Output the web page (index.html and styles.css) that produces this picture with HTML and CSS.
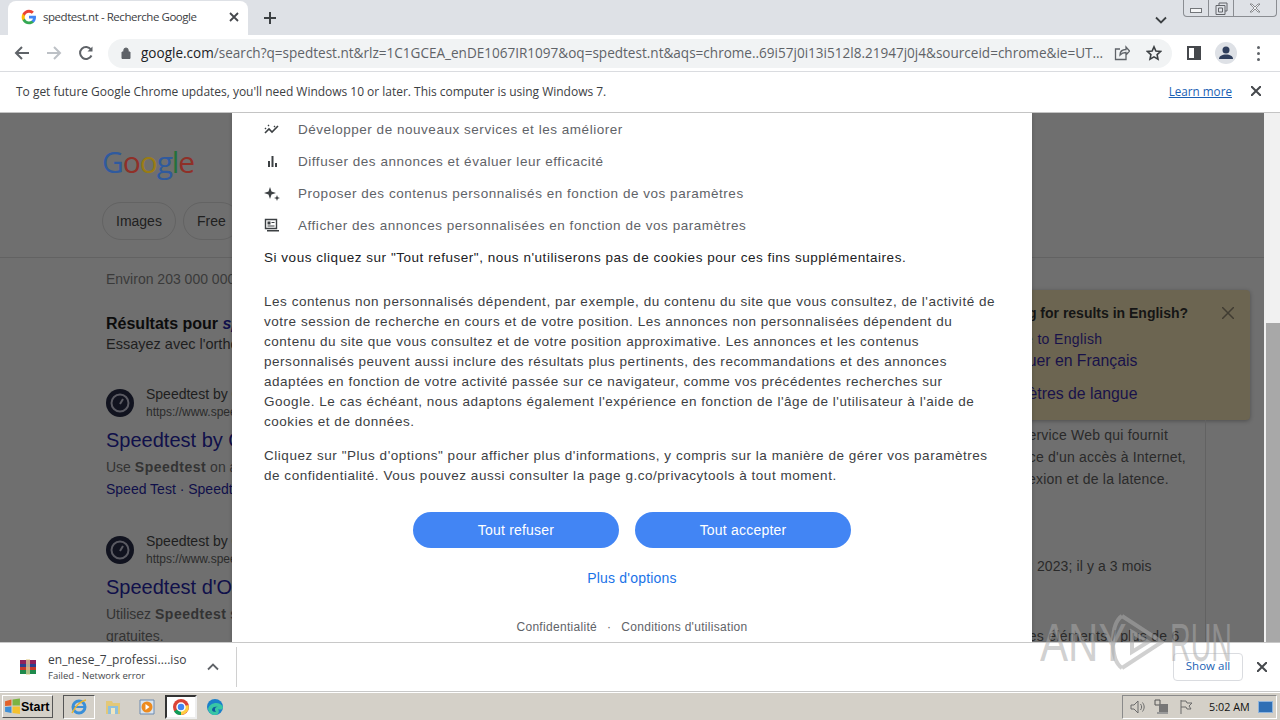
FILE: index.html
```html
<!DOCTYPE html>
<html lang="fr">
  <head>
    <meta charset="UTF-8" />
    <title>spedtest.nt - Recherche Google</title>
    <link rel="stylesheet" href="styles.css">
  </head>
  <body>
    <div class="tabstrip">
      <div class="tab">
        <svg class="favicon" viewBox="0 0 48 48" width="16" height="16">
          <path fill="#4285f4" d="M45 24.500c0-1.600-.1-3.100-.4-4.500H24v8.500h11.800c-.5 2.700-2 5-4.400 6.600v5.500h7.100C42.700 36.700 45 31.100 45 24.500z"/>
          <path fill="#34a853" d="M24 46c5.900 0 10.900-2 14.500-5.400l-7.100-5.500c-2 1.300-4.500 2.100-7.400 2.100-5.700 0-10.500-3.800-12.200-9H4.500v5.700C8.100 41 15.500 46 24 46z"/>
          <path fill="#fbbc05" d="M11.800 28.700c-.4-1.300-.7-2.700-.7-4.200s.3-2.900.7-4.200v-5.700H4.500C3 17.600 2 21 2 24.500s1 6.900 2.500 9.900l7.300-5.700z"/>
          <path fill="#ea4335" d="M24 11.300c3.200 0 6.100 1.100 8.400 3.300l6.300-6.300C34.900 4.800 29.900 2.500 24 2.500 15.500 2.500 8.100 7.500 4.500 14.600l7.300 5.700c1.700-5.200 6.500-9 12.200-9z"/>
        </svg>
        <span class="tab-title">spedtest.nt - Recherche Google</span>
        <svg class="tab-close" viewBox="0 0 10 10" width="10" height="10"><path d="M1 1l8 8M9 1l-8 8"/></svg>
      </div>
      <svg class="new-tab" viewBox="0 0 12 12" width="12" height="12"><path d="M6 0v12M0 6h12"/></svg>
      <div class="strip-fill"></div>
      <svg class="tab-list" viewBox="0 0 12 8" width="12" height="8"><path d="M1 1.500l5 5 5-5"/></svg>
      <div class="win-controls">
        <div class="win-btn win-min"><span class="min-glyph"></span></div>
        <div class="win-btn win-max">
          <svg viewBox="0 0 13 13" width="13" height="13"><path d="M4 3V1h8v8h-2M1 3.500h9v9H1zM3.500 6h4v4h-4z"/></svg>
        </div>
        <div class="win-btn win-close">
          <svg viewBox="0 0 12 10" width="12" height="10"><path d="M1 1l2 0 3 3 3-3 2 0-4 4 4 4-2 0-3-3-3 3-2 0 4-4z"/></svg>
        </div>
      </div>
    </div>

    <div class="toolbar">
      <svg class="nav-icon" viewBox="0 0 16 16" width="16" height="16"><path d="M15 8H2M8 2L2 8l6 6"/></svg>
      <svg class="nav-icon nav-off" viewBox="0 0 16 16" width="16" height="16"><path d="M1 8h13M8 2l6 6-6 6"/></svg>
      <svg class="nav-icon nav-last" viewBox="0 0 16 16" width="16" height="16"><path d="M13.500 10.500A6 6 0 1 1 13 4.500"/><path class="solid" d="M14.500 1.500v5h-5z"/></svg>
      <div class="omnibox">
        <svg class="lock" viewBox="0 0 10 12" width="10" height="12"><path d="M1 5h8v6.500H1zM2.800 5V3.200a2.200 2.200 0 0 1 4.400 0V5" /></svg>
        <span class="url"><span class="url-host">google.com</span>/search?q=spedtest.nt&amp;rlz=1C1GCEA_enDE1067IR1097&amp;oq=spedtest.nt&amp;aqs=chrome..69i57j0i13i512l8.21947j0j4&amp;sourceid=chrome&amp;ie=UT...</span>
        <svg class="omni-icon share" viewBox="0 0 16 16" width="16" height="16"><path d="M6 4H1.500v10.500H12V10M6 10c0-3.500 2.500-5.500 6-5.500V2l3.500 4-3.500 4V7.500c-2.500 0-4.500.8-6 2.500z"/></svg>
        <svg class="omni-icon star" viewBox="0 0 16 16" width="16" height="16"><path d="M8 1.800l1.900 4.200 4.600.5-3.400 3.100.9 4.600L8 11.900l-4 2.300.9-4.600-3.400-3.100 4.600-.5z"/></svg>
      </div>
      <span class="side-panel"><span class="side-panel-bar"></span></span>
      <span class="avatar">
        <svg viewBox="0 0 22 22" width="22" height="22"><circle cx="11" cy="8" r="3.500"/><path d="M4 17c0-3 3-4.500 7-4.500s7 1.500 7 4.500z"/></svg>
      </span>
      <span class="kebab"><i></i><i></i><i></i></span>
    </div>

    <div class="infobar">
      <span class="info-text">To get future Google Chrome updates, you'll need Windows 10 or later. This computer is using Windows 7.</span>
      <a class="info-link">Learn more</a>
      <svg class="info-close" viewBox="0 0 10 10" width="10" height="10"><path d="M0 0l10 10M10 0L0 10"/></svg>
    </div>

    <div class="page">
      <div class="results">
        <div class="serp-head">
          <div class="g-logo"><span class="c-b">G</span><span class="c-r">o</span><span class="c-y">o</span><span class="c-b">g</span><span class="c-g">l</span><span class="c-r">e</span></div>
          <div class="chips">
            <span class="chip">Images</span>
            <span class="chip">Free</span>
          </div>
        </div>
        <div class="serp-body">
          <div class="col-main">
            <p class="stats">Environ 203 000 000 résultats</p>
            <p class="spell"><b>Résultats pour <i class="spell-q">speedtest</i></b></p>
            <p class="spell-alt">Essayez avec l'orthographe</p>
            <div class="hit">
              <div class="hit-site">
                <svg class="gauge" viewBox="0 0 28 28" width="28" height="28"><circle cx="14" cy="14" r="14" fill="#11131f"/><circle cx="14" cy="14" r="8.500" fill="none" stroke="#5a5a62" stroke-width="2"/><path d="M14 15l3-5" stroke="#5a5a62" stroke-width="2"/></svg>
                <div class="hit-meta"><span class="hit-name">Speedtest by Ookla</span><span class="hit-url">https://www.speedtest.net</span></div>
              </div>
              <div class="hit-title">Speedtest by Ookla</div>
              <p class="hit-desc">Use <b>Speedtest</b> on all your devices</p>
              <p class="hit-links">Speed Test · Speedtest</p>
            </div>
            <div class="hit">
              <div class="hit-site">
                <svg class="gauge" viewBox="0 0 28 28" width="28" height="28"><circle cx="14" cy="14" r="14" fill="#11131f"/><circle cx="14" cy="14" r="8.500" fill="none" stroke="#5a5a62" stroke-width="2"/><path d="M14 15l3-5" stroke="#5a5a62" stroke-width="2"/></svg>
                <div class="hit-meta"><span class="hit-name">Speedtest by Ookla</span><span class="hit-url">https://www.speedtest.net</span></div>
              </div>
              <div class="hit-title">Speedtest d'Ookla</div>
              <p class="hit-desc">Utilisez <b>Speedtest</b> sur tous vos</p>
              <p class="hit-desc hit-last">gratuites.</p>
            </div>
          </div>
          <div class="col-side">
            <div class="lang-card">
              <div class="lang-title">Looking for results in English?<svg class="lang-close" viewBox="0 0 12 12" width="12" height="12"><path d="M0 0l12 12M12 0L0 12"/></svg></div>
              <div class="lang-link lang-first">Change to English</div>
              <div class="lang-link lang-second">Continuer en Français</div>
              <div class="lang-link lang-third">Paramètres de langue</div>
            </div>
            <div class="panel">
              <p class="panel-text">Speedtest est un site et un service Web qui fournit</p>
              <p class="panel-text">une analyse de la performance d'un accès à Internet,</p>
              <p class="panel-text">comme la vitesse de la connexion et de la latence.</p>
              <p class="panel-date">Date de sortie initiale du site : 2023; il y a 3 mois</p>
              <p class="panel-more">Voir encore beaucoup d'autres éléments / plus de 6</p>
            </div>
          </div>
        </div>
      </div>

      <div class="scrollbar"><div class="scroll-thumb"></div></div>

      <div class="consent">
        <div class="purpose">
          <svg viewBox="0 0 16 16" width="16" height="16"><path d="M1 12l4-4 3 3 6-6" fill="none" stroke="#3c4043" stroke-width="1.600"/><path d="M1 7l1 1M4 4l1 1M10 5l1 1" stroke="#3c4043" stroke-width="1.400"/></svg>
          <span>Développer de nouveaux services et les améliorer</span>
        </div>
        <div class="purpose">
          <svg viewBox="0 0 16 16" width="16" height="16"><path d="M4 8h2v6H4zM7.500 3h2v11h-2zM11 10h2v4h-2z" fill="#3c4043"/></svg>
          <span>Diffuser des annonces et évaluer leur efficacité</span>
        </div>
        <div class="purpose">
          <svg viewBox="0 0 16 16" width="16" height="16"><path d="M6 2l1.500 4.500L12 8l-4.500 1.500L6 14l-1.500-4.500L0 8l4.500-1.500zM13 10l.8 2.200L16 13l-2.200.8L13 16l-.8-2.200L10 13l2.200-.8z" fill="#3c4043"/></svg>
          <span>Proposer des contenus personnalisés en fonction de vos paramètres</span>
        </div>
        <div class="purpose">
          <svg viewBox="0 0 16 16" width="16" height="16"><path d="M1.500 2.500h11v9h-11z" fill="none" stroke="#3c4043" stroke-width="1.400"/><path d="M3.500 4.500h3v3h-3zM7.500 5h3v1h-3zM3.500 8.500h7v1h-7zM3 13h12v1.500H3z" fill="#3c4043"/></svg>
          <span>Afficher des annonces personnalisées en fonction de vos paramètres</span>
        </div>
        <p class="refuse-note">Si vous cliquez sur "Tout refuser", nous n'utiliserons pas de cookies pour ces fins supplémentaires.</p>
        <p class="consent-para first-para">Les contenus non personnalisés dépendent, par exemple, du contenu du site que vous consultez, de l'activité de votre session de recherche en cours et de votre position. Les annonces non personnalisées dépendent du contenu du site que vous consultez et de votre position approximative. Les annonces et les contenus personnalisés peuvent aussi inclure des résultats plus pertinents, des recommandations et des annonces adaptées en fonction de votre activité passée sur ce navigateur, comme vos précédentes recherches sur Google. Le cas échéant, nous adaptons également l'expérience en fonction de l'âge de l'utilisateur à l'aide de cookies et de données.</p>
        <p class="consent-para second-para">Cliquez sur "Plus d'options" pour afficher plus d'informations, y compris sur la manière de gérer vos paramètres de confidentialité. Vous pouvez aussi consulter la page g.co/privacytools à tout moment.</p>
        <div class="consent-btns">
          <a class="pill pill-refuse">Tout refuser</a>
          <a class="pill pill-accept">Tout accepter</a>
        </div>
        <a class="more-options">Plus d'options</a>
        <div class="consent-foot">
          <span>Confidentialité</span><span class="foot-dot">·</span><span>Conditions d'utilisation</span>
        </div>
      </div>
    </div>

    <div class="shelf">
      <div class="dl-item">
        <svg class="rar" viewBox="0 0 16 16" width="16" height="16">
          <path fill="#8e1f5c" d="M0 1h16v4H0z"/>
          <path fill="#2b3f8f" d="M0 5h16v3H0z"/>
          <path fill="#c7382c" d="M0 8h16v3H0z"/>
          <path fill="#1f8a4c" d="M0 11h16v4H0z"/>
          <path fill="#e8d9a0" d="M6 0h4v16H6z" opacity=".7"/>
        </svg>
        <div class="dl-text">
          <span class="dl-name">en_nese_7_professi....iso</span>
          <span class="dl-status">Failed - Network error</span>
        </div>
        <svg class="dl-caret" viewBox="0 0 12 8" width="12" height="8"><path d="M1 6.500l5-5 5 5"/></svg>
      </div>
      <div class="shelf-fill"></div>
      <a class="show-all">Show all</a>
      <svg class="shelf-close" viewBox="0 0 10 10" width="10" height="10"><path d="M0 0l10 10M10 0L0 10"/></svg>
    </div>

    <div class="taskbar">
      <div class="start-btn">
        <svg viewBox="0 0 16 16" width="17" height="17">
          <path fill="#e2622a" d="M1 3l6-1.500V7L1 7.500z"/>
          <path fill="#7cb342" d="M8 1.500l7 -1V7L8 7z"/>
          <path fill="#3f8fd6" d="M1 8.500L7 8v6l-6-1z"/>
          <path fill="#f5c12e" d="M8 8h7v7l-7-1z"/>
        </svg>
        <span>Start</span>
      </div>
      <div class="task-btn task-sunken">
        <svg viewBox="0 0 18 18" width="18" height="18"><circle cx="9" cy="9" r="6" fill="none" stroke="#3a8fd8" stroke-width="3"/><path d="M3 9h12" stroke="#3a8fd8" stroke-width="2"/><path d="M2 15C6 7 11 3 16 2" fill="none" stroke="#e9b52f" stroke-width="1.500"/></svg>
      </div>
      <div class="task-btn">
        <svg viewBox="0 0 18 18" width="18" height="18"><path d="M2 3h6l1 2h7v11H2z" fill="#e3c878"/><path d="M4 8h10v8H4z" fill="#8fc0dd"/><path d="M7 10h4v6H7z" fill="#f0e6c0"/></svg>
      </div>
      <div class="task-btn">
        <svg viewBox="0 0 18 18" width="18" height="18"><path d="M2 2h14v14H2z" fill="#d9e4ef" stroke="#6d8bb0"/><circle cx="9" cy="9" r="5.500" fill="#ed8b1f"/><path d="M7.500 6l4 3-4 3z" fill="#fff"/></svg>
      </div>
      <div class="task-btn task-active">
        <svg viewBox="0 0 18 18" width="18" height="18">
          <circle cx="9" cy="9" r="8" fill="#db4437"/>
          <path d="M9 9L2 13.500A8 8 0 0 0 9 17z" fill="#0f9d58"/>
          <path d="M9 9l7.500-2A8 8 0 0 1 9 17z" fill="#ffcd40"/>
          <circle cx="9" cy="9" r="4" fill="#4285f4" stroke="#fff" stroke-width="1.500"/>
        </svg>
      </div>
      <div class="task-btn">
        <svg viewBox="0 0 18 18" width="18" height="18"><circle cx="9" cy="9" r="8" fill="#1a7fc9"/><path d="M2 11c2-7 12-8 15-2 0 3-3 3-5 2 2 3 0 6-3 6-3 0-6-2-7-6z" fill="#38c6a5"/><path d="M6 12c0-3 3-4 6-3-3 0-4 2-2 5-2 0-4-1-4-2z" fill="#0e5a9e"/></svg>
      </div>
      <div class="task-fill"></div>
      <div class="tray">
        <svg viewBox="0 0 16 16" width="16" height="16"><path d="M1 6h3l4-4v12l-4-4H1z" fill="none" stroke="#6b6b6b"/><path d="M10.500 5c1.500 2 1.500 4 0 6M12.500 3.500c2.200 3 2.200 6 0 9" fill="none" stroke="#6b6b6b"/></svg>
        <svg viewBox="0 0 16 16" width="16" height="16"><path d="M1 1h5v5H1z" fill="none" stroke="#555"/><path d="M5 5h9v8H5z" fill="#777"/><path d="M3 13h11v2H3z" fill="#999"/></svg>
        <svg viewBox="0 0 16 16" width="16" height="16"><path d="M3 1v14M3 2h5l1 2h5l-3 3 2 3H9L8 8H3" fill="none" stroke="#6b6b6b"/></svg>
        <span class="clock">5:02 AM</span>
        <span class="desktop-peek"></span>
      </div>
    </div>

    <div class="watermark">
      <span class="wm-any">ANY</span>
      <svg viewBox="0 0 54 60" width="54" height="60"><path d="M12 4C6 8 3 16 3 30s3 22 9 26M12 4l40 26-40 26M22 20l16 10-16 10z"/></svg>
      <span class="wm-run">RUN</span>
    </div>
  </body>
</html>
```

FILE: styles.css
```css
* {
  box-sizing: border-box;
}

html,
body {
  margin: 0;
  padding: 0;
  height: 720px;
  overflow: hidden;
}

body {
  display: flex;
  flex-direction: column;
  position: relative;
  font-family: "Liberation Sans", Arial, sans-serif;
  background-color: white;
}

p {
  margin: 0;
}

/* onglets */
.tabstrip {
  height: 35px;
  flex: none;
  display: flex;
  align-items: flex-end;
  padding-left: 8px;
  background-color: #dee1e6;
}

.tab {
  width: 240px;
  height: 34px;
  display: flex;
  align-items: center;
  padding: 0 9px 3px 13px;
  background-color: white;
  border-radius: 8px 8px 0 0;
}

.tab-title {
  flex: 1;
  margin-left: 6px;
  font-family: "Open Sans", sans-serif;
  font-size: 11.500px;
  letter-spacing: -0.450px;
  color: #3c4043;
  white-space: nowrap;
}

.tab-close path {
  fill: none;
  stroke: #45484c;
  stroke-width: 1.800;
}

.new-tab {
  margin: 0 0 11px 16px;
}

.new-tab path {
  fill: none;
  stroke: #3c4043;
  stroke-width: 2;
}

.strip-fill {
  flex: 1;
}

.tab-list {
  margin: 0 16px 11px 0;
}

.tab-list path {
  fill: none;
  stroke: #3c4043;
  stroke-width: 1.800;
}

.win-controls {
  align-self: flex-start;
  width: 94px;
  height: 17px;
  margin-right: 3px;
  display: flex;
  border: 1px solid #8a8d92;
  border-top: none;
  border-radius: 0 0 4px 4px;
  background-color: #dee1e6;
}

.win-btn {
  display: flex;
  align-items: center;
  justify-content: center;
  border-right: 1px solid #8a8d92;
}

.win-min {
  width: 25px;
}

.win-max {
  width: 25px;
}

.win-close {
  flex: 1;
  border-right: none;
}

.min-glyph {
  width: 12px;
  height: 5px;
  margin-top: 4px;
  background-color: #f4f5f6;
  border: 1px solid #73767a;
}

.win-max path {
  fill: none;
  stroke: #62656a;
}

.win-close path {
  fill: #f4f5f6;
  stroke: #73767a;
  stroke-width: 0.800;
}

/* barre d'adresse */
.toolbar {
  height: 37px;
  flex: none;
  display: flex;
  align-items: center;
  padding-left: 14px;
  background-color: white;
  border-bottom: 1px solid #dadce0;
}

.nav-icon {
  margin-right: 16px;
}

.nav-last {
  margin-right: 14px;
}

.nav-icon path {
  fill: none;
  stroke: #5f6368;
  stroke-width: 2;
}

.nav-icon .solid {
  fill: #5f6368;
  stroke: none;
}

.nav-off path {
  stroke: #bdc1c6;
}

.omnibox {
  width: 1064px;
  height: 29px;
  display: flex;
  align-items: center;
  padding: 0 10px 0 13px;
  background-color: #f1f3f4;
  border-radius: 15px;
}

.lock path {
  fill: #5f6368;
  stroke: #5f6368;
}

.url {
  flex: 1;
  margin-left: 10px;
  font-family: "Open Sans", sans-serif;
  font-size: 13.560px;
  color: #5f6368;
  white-space: nowrap;
}

.url-host {
  color: #202124;
}

.omni-icon {
  flex: none;
  margin-left: 16px;
}

.share {
  margin-left: 4px;
}

.omni-icon path {
  fill: none;
  stroke: #5f6368;
  stroke-width: 1.300;
}

.star path {
  stroke: #3c4043;
  stroke-width: 1.600;
}

.side-panel {
  width: 14px;
  height: 14px;
  margin-left: 15px;
  display: flex;
  justify-content: flex-end;
  background-color: white;
  border: 2px solid #45484c;
}

.side-panel-bar {
  width: 5px;
  background-color: #45484c;
}

.avatar {
  width: 22px;
  height: 22px;
  margin-left: 14px;
  border-radius: 50%;
  background-color: #dee1e6;
}

.avatar svg {
  display: block;
  fill: #2f3e5c;
}

.kebab {
  margin-left: 20px;
  display: flex;
  flex-direction: column;
  gap: 3px;
}

.kebab i {
  width: 3px;
  height: 3px;
  border-radius: 50%;
  background-color: #5f6368;
}

/* bandeau */
.infobar {
  height: 41px;
  flex: none;
  display: flex;
  align-items: center;
  padding: 0 19px 2px 16px;
  background-color: white;
  border-bottom: 1px solid #c4c4c4;
}

.info-text {
  flex: 1;
  font-family: "Open Sans", sans-serif;
  font-size: 12px;
  letter-spacing: -0.020px;
  color: #3c4043;
}

.info-link {
  font-family: "Open Sans", sans-serif;
  font-size: 11.700px;
  color: #1a5fb4;
  text-decoration: underline;
}

.info-close {
  margin-left: 19px;
}

.info-close path {
  fill: none;
  stroke: #45484c;
  stroke-width: 2;
}

/* page assombrie */
.page {
  height: 529px;
  flex: none;
  position: relative;
  overflow: hidden;
  display: flex;
  background-color: #6f6f6f;
}

.results {
  flex: 1;
  min-width: 0;
}

.serp-head {
  height: 145px;
  padding: 32px 0 0 102px;
  border-bottom: 1px solid #626262;
}

.g-logo {
  font-family: "Open Sans", sans-serif;
  font-size: 30px;
  line-height: 34px;
  letter-spacing: -1.100px;
}

.c-b {
  color: #2f5a9e;
}

.c-r {
  color: #8f3028;
}

.c-y {
  color: #9a7c14;
}

.c-g {
  color: #24713a;
}

.chips {
  display: flex;
  gap: 7px;
  margin-top: 23px;
}

.chip {
  height: 38px;
  padding: 0 13px;
  display: flex;
  align-items: center;
  font-size: 14px;
  color: #202020;
  border: 1px solid #636363;
  border-radius: 19px;
}

.serp-body {
  display: flex;
  height: 384px;
}

.col-main {
  width: 670px;
  padding: 13px 0 0 106px;
  color: #222;
  font-size: 14px;
}

.stats {
  font-size: 14px;
  line-height: 16px;
  color: #3a3a3a;
}

.spell {
  margin-top: 27px;
  font-size: 16px;
  line-height: 20px;
  color: #0c0c0c;
}

.spell-q {
  color: #10104a;
}

.spell-alt {
  font-size: 14.500px;
  line-height: 20px;
  color: #1e1e1e;
}

.hit {
  height: 147px;
  margin-top: 31px;
}

.hit + .hit {
  margin-top: 0;
}

.hit-site {
  display: flex;
  align-items: center;
  gap: 12px;
}

.hit-meta {
  display: flex;
  flex-direction: column;
}

.hit-name {
  font-size: 14px;
  line-height: 18px;
  color: #1e1e1e;
}

.hit-url {
  font-size: 12px;
  line-height: 18px;
  color: #2b2b2b;
}

.hit-title {
  margin-top: 6px;
  font-size: 20px;
  line-height: 26px;
  color: #10104a;
}

.hit-desc {
  margin-top: 5px;
  line-height: 18px;
  color: #333;
}

.hit-desc b {
  letter-spacing: 0.500px;
}

.hit-last {
  margin-top: 4px;
}

.hit-links {
  margin-top: 4px;
  line-height: 18px;
  color: #10104a;
}

.col-side {
  width: 594px;
  padding-top: 32px;
  margin-right: 16px;
  flex: none;
  margin-left: auto;
}

.lang-card {
  width: 582px;
  height: 130px;
  padding: 14px 16px 0 314px;
  margin-left: 14px;
  background-color: #6c6551;
  border-radius: 4px;
  box-shadow: 0 1px 4px rgba(0, 0, 0, 0.3);
}

.lang-title {
  display: flex;
  justify-content: space-between;
  align-items: center;
  height: 18px;
  font-size: 14px;
  font-weight: bold;
  color: #151515;
}

.lang-close path {
  fill: none;
  stroke: #403c32;
  stroke-width: 1.500;
}

.lang-link {
  color: #18124a;
  font-size: 15.800px;
  line-height: 20px;
}

.lang-first {
  margin-top: 8px;
  font-size: 14px;
  line-height: 18px;
  letter-spacing: 0.350px;
}

.lang-second {
  margin-top: 3px;
}

.lang-third {
  margin-top: 13px;
}

.panel {
  width: 552px;
  height: 230px;
  padding-top: 4px;
  padding-left: 192px;
  border-right: 1px solid #626262;
}

.panel-text {
  font-size: 14px;
  line-height: 22px;
  letter-spacing: 0.200px;
  color: #2a2a2a;
  white-space: nowrap;
}

.panel-date {
  margin-top: 67px;
  font-size: 14px;
  line-height: 18px;
  letter-spacing: 0.100px;
  color: #2a2a2a;
  white-space: nowrap;
}

.panel-more {
  margin-top: 52px;
  font-size: 14px;
  line-height: 18px;
  letter-spacing: 0.300px;
  color: #2a2a2a;
  white-space: nowrap;
}

.scrollbar {
  width: 16px;
  flex: none;
  padding-top: 210px;
  background-color: #f1f1f1;
}

.scroll-thumb {
  height: 319px;
  margin-left: 2px;
  background-color: #a8a8a8;
}

/* fenêtre de consentement */
.consent {
  position: absolute;
  top: 0;
  left: 232px;
  width: 800px;
  height: 529px;
  padding: 0 32px;
  background-color: white;
  box-shadow: 0 0 4px rgba(0, 0, 0, 0.2);
  font-size: 13.500px;
  letter-spacing: 0.530px;
  color: #202124;
}

.purpose {
  height: 32px;
  display: flex;
  align-items: center;
  gap: 18px;
  color: #5f6368;
}

.purpose svg {
  flex: none;
}

.refuse-note {
  margin-top: 7px;
  line-height: 20px;
  color: #202124;
  white-space: nowrap;
}

.consent-para {
  width: 732px;
  line-height: 20px;
  color: #3c4043;
}

.first-para {
  margin-top: 24px;
}

.second-para {
  margin-top: 14px;
}

.consent-btns {
  display: flex;
  justify-content: center;
  gap: 16px;
  margin-top: 26px;
}

.pill {
  height: 36px;
  display: flex;
  align-items: center;
  justify-content: center;
  font-size: 14px;
  letter-spacing: 0.200px;
  color: white;
  background-color: #4285f4;
  border-radius: 18px;
}

.pill-refuse {
  width: 206px;
}

.pill-accept {
  width: 216px;
}

.more-options {
  display: block;
  margin-top: 21px;
  text-align: center;
  font-size: 14px;
  line-height: 18px;
  letter-spacing: 0.200px;
  color: #1a73e8;
}

.consent-foot {
  display: flex;
  justify-content: center;
  gap: 10px;
  margin-top: 32px;
  font-size: 12px;
  line-height: 16px;
  letter-spacing: 0.300px;
  color: #5f6368;
}

/* téléchargements */
.shelf {
  height: 50px;
  flex: none;
  display: flex;
  align-items: center;
  padding-right: 13px;
  background-color: white;
  border-top: 1px solid #c8c8c8;
  border-bottom: 1px solid #c8c8c8;
}

.dl-item {
  width: 237px;
  height: 40px;
  display: flex;
  align-items: center;
  padding: 0 17px 0 20px;
  border-right: 1px solid #d0d0d0;
}

.dl-text {
  flex: 1;
  margin: -2px 0 0 12px;
  display: flex;
  flex-direction: column;
  font-family: "Open Sans", sans-serif;
}

.dl-name {
  font-size: 12px;
  line-height: 18px;
  letter-spacing: 0.080px;
  color: #3c4043;
  white-space: nowrap;
}

.dl-status {
  font-size: 9.500px;
  line-height: 13px;
  color: #45484c;
}

.dl-caret path {
  fill: none;
  stroke: #5f6368;
  stroke-width: 1.800;
}

.shelf-fill {
  flex: 1;
}

.show-all {
  width: 70px;
  height: 28px;
  display: flex;
  align-items: center;
  justify-content: center;
  padding-bottom: 3px;
  font-family: "Open Sans", sans-serif;
  font-size: 11.500px;
  color: #1a5fb4;
  background-color: white;
  border: 1px solid #dadce0;
  border-radius: 4px;
}

.shelf-close {
  margin-left: 14px;
}

.shelf-close path {
  fill: none;
  stroke: #45484c;
  stroke-width: 2;
}

/* barre des tâches */
.taskbar {
  height: 28px;
  flex: none;
  display: flex;
  align-items: center;
  padding: 2px 3px 2px 2px;
  background-color: #d4d0c8;
  border-top: 1px solid #fff;
}

.start-btn {
  width: 51px;
  height: 23px;
  display: flex;
  align-items: center;
  padding-left: 1px;
  font-size: 12.500px;
  font-weight: bold;
  color: black;
  border: 1px solid;
  border-color: #fff #555 #555 #fff;
}

.task-btn {
  width: 32px;
  height: 24px;
  margin-left: 2px;
  display: flex;
  align-items: center;
  justify-content: center;
}

.start-btn + .task-btn {
  margin-left: 10px;
}

.task-sunken {
  border: 1px solid;
  border-color: #555 #fff #fff #555;
}

.task-active {
  background-color: #fff;
  border: 2px solid;
  border-color: #333 #eee #eee #333;
}

.task-fill {
  flex: 1;
}

.tray {
  width: 155px;
  height: 24px;
  display: flex;
  align-items: center;
  gap: 8px;
  padding-left: 7px;
  border: 1px solid;
  border-color: #8a8a8a #fff #fff #8a8a8a;
}

.clock {
  margin-left: 7px;
  font-family: "Open Sans", sans-serif;
  font-size: 10.800px;
  color: #111;
  white-space: nowrap;
}

.desktop-peek {
  width: 15px;
  height: 12px;
  background-color: #2f6fb5;
  border: 1px solid #8fb4dc;
}

/* filigrane */
.watermark {
  position: absolute;
  left: 1040px;
  top: 612px;
  height: 60px;
  display: flex;
  align-items: center;
  font-size: 54px;
  color: rgba(170, 170, 170, 0.55);
}

.wm-any {
  width: 70px;
  transform: scaleX(0.78);
  transform-origin: left center;
}

.wm-run {
  width: 62px;
  margin-left: 6px;
  transform: scaleX(0.53);
  transform-origin: left center;
}

.watermark svg path {
  fill: none;
  stroke: rgba(170, 170, 170, 0.55);
  stroke-width: 4;
}
```
